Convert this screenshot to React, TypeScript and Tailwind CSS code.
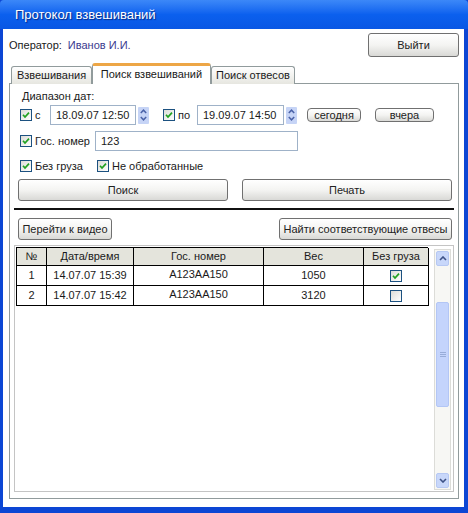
import React from "react";

function Check({ checked = true }: { checked?: boolean }) {
  return (
    <span className="w-[12px] h-[12px] border border-[#1c5180] bg-linear-to-br from-[#dcdcd7] to-white flex items-center justify-center shrink-0">
      {checked && (
        <svg width="8" height="8" viewBox="0 0 8 8">
          <path d="M1 3.8 L3 6 L7 1.6" fill="none" stroke="#21a121" strokeWidth="1.7" />
        </svg>
      )}
    </span>
  );
}

function Spin() {
  return (
    <div className="w-[11px] h-[17px] ml-[2px] bg-[#c6d4f6] rounded-[1px] flex flex-col items-center justify-center gap-[2px] shrink-0">
      <svg width="7" height="5" viewBox="0 0 7 5">
        <path d="M0.8 4 L3.5 1.2 L6.2 4" stroke="#4a62a8" strokeWidth="1.5" fill="none" />
      </svg>
      <svg width="7" height="5" viewBox="0 0 7 5">
        <path d="M0.8 1 L3.5 3.8 L6.2 1" stroke="#4a62a8" strokeWidth="1.5" fill="none" />
      </svg>
    </div>
  );
}

function Btn({ children, className = "h-[22px]" }: { children: React.ReactNode; className?: string }) {
  return (
    <div
      className={`border border-[#707070] bg-linear-to-b from-white via-[#f4f4f2] to-[#d9d9d6] flex items-center justify-center text-[11px] text-[#222] shrink-0 ${className}`}
    >
      {children}
    </div>
  );
}

function Input({ value, className = "" }: { value: string; className?: string }) {
  return (
    <div className={`h-[20px] border border-[#9fb2c8] bg-white flex items-center pl-[5px] text-[11px] shrink-0 ${className}`}>
      {value}
    </div>
  );
}

const rows = [
  { n: "1", date: "14.07.07 15:39", plate: "A123AA150", weight: "1050", empty: true },
  { n: "2", date: "14.07.07 15:42", plate: "A123AA150", weight: "3120", empty: false },
];

function Arrow({ up }: { up?: boolean }) {
  return (
    <div className="h-[15px] mx-[1px] bg-[#c8d7fa] border border-[#b6c8f3] rounded-[2px] flex items-center justify-center shrink-0">
      <svg width="8" height="5" viewBox="0 0 8 5">
        <path d={up ? "M1 4 L4 1 L7 4" : "M1 1 L4 4 L7 1"} stroke="#3d5186" strokeWidth="1.6" fill="none" />
      </svg>
    </div>
  );
}

export default function App() {
  return (
    <div className="w-[468px] h-[513px] flex flex-col bg-[#0c46d4] font-['Liberation_Sans',Arial,sans-serif] text-[11px] text-[#1a1a1a]">
      {/* Title */}
      <div className="h-[29px] shrink-0 bg-linear-to-b from-[#3c88f8] via-[#0b60ee] to-[#0957e4] flex items-center pl-[15px] rounded-t-[4px]">
        <span className="text-[13px] text-white [text-shadow:1px_1px_1px_#0a2a80]">Протокол взвешиваний</span>
      </div>

      <div className="flex-1 flex pl-[3px] pr-[6px] pb-[6px]">
        <div className="flex-1 bg-white flex flex-col">
          {/* Operator */}
          <div className="h-[24px] mt-[4px] flex items-center pl-[6px] pr-[5px]">
            <span>Оператор:</span>
            <span className="ml-[6px] text-[#3a3a8e]">Иванов И.И.</span>
            <Btn className="ml-auto w-[91px] h-[24px] rounded-[3px]">Выйти</Btn>
          </div>

          {/* Tabs */}
          <div className="mt-[6px] ml-[8px] h-[21px] flex items-end relative z-10">
            <div className="w-[81px] h-[18px] border border-b-0 border-[#919b9c] rounded-t-[3px] bg-linear-to-b from-white to-[#e6e6e0] flex items-center justify-center">
              Взвешивания
            </div>
            <div className="w-[119px] h-[21px] border-x border-[#919b9c] border-t-[3px] border-t-[#eda646] rounded-t-[3px] bg-white flex items-center justify-center pb-[2px]">
              Поиск взвешиваний
            </div>
            <div className="w-[84px] h-[18px] border border-b-0 border-[#919b9c] rounded-t-[3px] bg-linear-to-b from-white to-[#e6e6e0] flex items-center justify-center">
              Поиск отвесов
            </div>
          </div>

          {/* Panel */}
          <div className="-mt-px ml-[6px] mr-[5px] border border-[#919b9c] flex flex-col pb-[6px]">
            <div className="pl-[12px] pt-[5px] h-[19px] leading-[14px]">Диапазон дат:</div>

            <div className="mt-[2px] h-[20px] flex items-center pl-[10px]">
              <Check />
              <span className="w-[18px] pl-[3px] shrink-0">с</span>
              <Input value="18.09.07 12:50" className="w-[86px]" />
              <Spin />
              <span className="ml-[14px]"><Check /></span>
              <span className="w-[22px] pl-[3px] shrink-0">по</span>
              <Input value="19.09.07 14:50" className="w-[87px]" />
              <Spin />
              <Btn className="ml-[10px] w-[54px] h-[14px] rounded-[4px]">сегодня</Btn>
              <Btn className="ml-[14px] w-[59px] h-[14px] rounded-[4px]">вчера</Btn>
            </div>

            <div className="mt-[6px] h-[20px] flex items-center pl-[10px]">
              <Check />
              <span className="w-[63px] pl-[3px] shrink-0">Гос. номер</span>
              <Input value="123" className="w-[203px]" />
            </div>

            <div className="mt-[8px] h-[14px] flex items-center pl-[10px]">
              <Check />
              <span className="w-[65px] pl-[3px] shrink-0">Без груза</span>
              <Check />
              <span className="pl-[3px]">Не обработанные</span>
            </div>

            <div className="mt-[6px] grid grid-cols-2 gap-[14px] pl-[8px] pr-[6px]">
              <Btn className="h-[22px] rounded-[3px]">Поиск</Btn>
              <Btn className="h-[22px] rounded-[3px]">Печать</Btn>
            </div>

            <div className="mt-[7px] mx-[4px] h-[2px] bg-[#111]" />

            <div className="mt-[8px] flex justify-between pl-[8px] pr-[6px]">
              <Btn className="w-[94px] h-[22px] rounded-[3px]">Перейти к видео</Btn>
              <Btn className="w-[173px] h-[22px] rounded-[3px]">Найти соответствующие отвесы</Btn>
            </div>

            {/* Table box */}
            <div className="mt-[5px] mx-[4px] h-[247px] border border-[#c4c4c4] flex pl-[1px] pt-[1px] pr-[2px] pb-[1px]">
              <div className="w-[412px]">
                <div className="grid grid-cols-[30px_87px_130px_100px_65px] border-t border-l border-black bg-[#e4e4dc] h-[19px]">
                  {["№", "Дата/время", "Гос. номер", "Вес", "Без груза"].map((h) => (
                    <div key={h} className="border-r border-b border-black flex items-center justify-center">
                      {h}
                    </div>
                  ))}
                </div>
                {rows.map((r) => (
                  <div key={r.n} className="grid grid-cols-[30px_87px_130px_100px_65px] border-l border-black h-[20px]">
                    <div className="border-r border-b border-black flex items-center justify-center">{r.n}</div>
                    <div className="border-r border-b border-black flex items-center justify-center">{r.date}</div>
                    <div className="border-r border-b border-black flex items-center justify-center pb-[2px]">{r.plate}</div>
                    <div className="border-r border-b border-black flex items-center justify-center">{r.weight}</div>
                    <div className="border-r border-b border-black flex items-center justify-center">
                      <Check checked={r.empty} />
                    </div>
                  </div>
                ))}
              </div>

              {/* Scrollbar */}
              <div className="ml-[6px] mt-[2px] w-[17px] border border-[#dcdcd8] bg-[#f7f7f4] flex flex-col py-[1px]">
                <Arrow up />
                <div className="mt-[36px] h-[105px] mx-[1px] bg-[#c4d4fc] border border-[#b3c6f5] rounded-[2px] flex flex-col items-center justify-center gap-[1px]">
                  <div className="w-[6px] h-px bg-[#98acd8]" />
                  <div className="w-[6px] h-px bg-[#98acd8]" />
                  <div className="w-[6px] h-px bg-[#98acd8]" />
                </div>
                <div className="flex-1" />
                <Arrow />
              </div>
            </div>
          </div>
        </div>
      </div>
    </div>
  );
}
